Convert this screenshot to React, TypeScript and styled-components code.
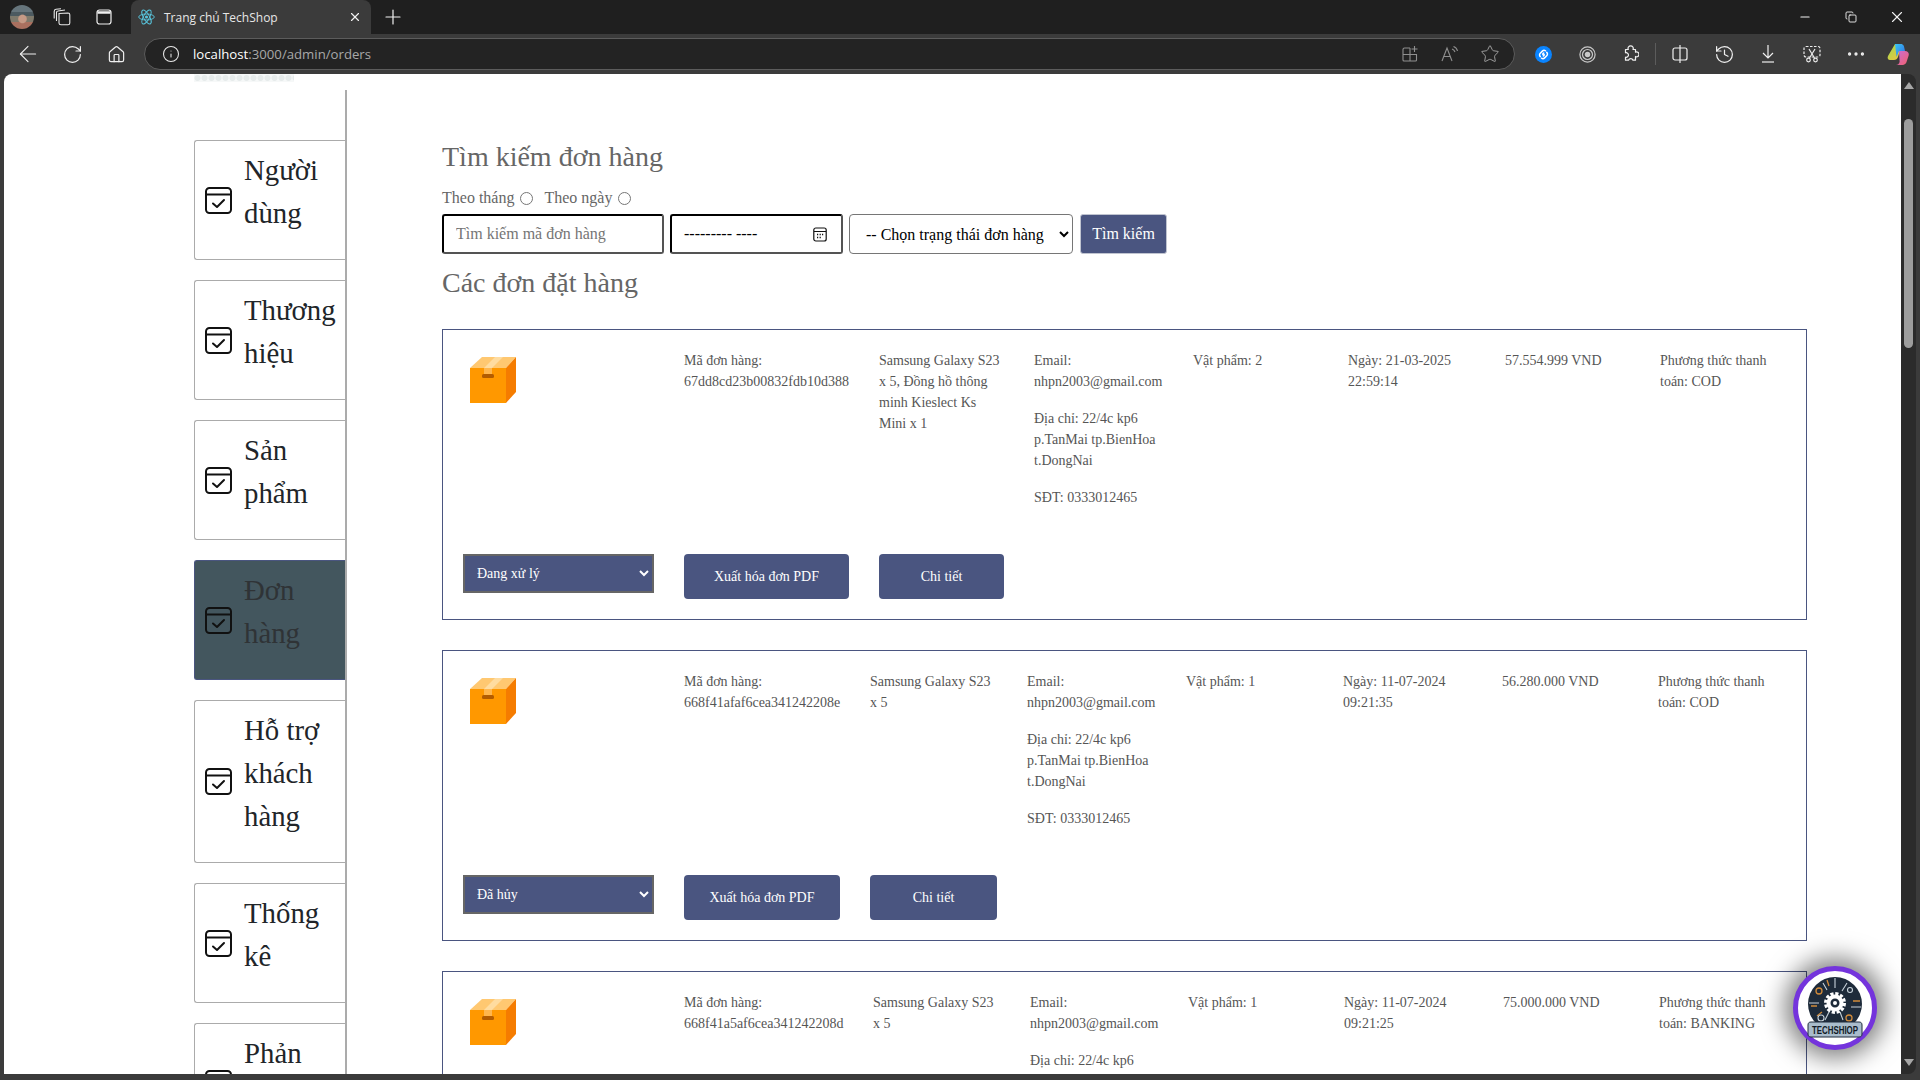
import React from 'react';
import styled, { createGlobalStyle } from 'styled-components';
import { ArrowLeft, Copy, History, Home, Info, Minus, MoreHorizontal, Plus, RotateCw, Star, X } from 'lucide-react';

const GlobalStyle = createGlobalStyle`
	html, body {
		margin: 0;
		padding: 0;
		height: 100%;
		overflow: hidden;
		background: #3b3b3b;
	}

	* {
		box-sizing: border-box;
	}
`;

const chromeFont = `"Open Sans", "Noto Sans", sans-serif`;
const pageFont = `"Liberation Serif", "Times New Roman", serif`;
const indigo = '#4a5580';

const Window = styled.div`
	display: flex;
	flex-direction: column;
	width: 1920px;
	height: 1080px;
	overflow: hidden;
	background: #3b3b3b;
`;

const TitleBar = styled.div`
	display: flex;
	align-items: flex-end;
	height: 34px;
	flex: none;
	background: #1f1f1f;
	color: #f2f2f2;
`;

const TitleSlot = styled.div<{ $w: number }>`
	display: flex;
	align-items: center;
	justify-content: center;
	flex: none;
	width: ${(p) => p.$w}px;
	height: 34px;
`;

const Avatar = styled.div`
	width: 24px;
	height: 24px;
	border-radius: 50%;
	background:
		radial-gradient(circle at 52% 58%, #c59a86 0 20%, transparent 26%),
		linear-gradient(180deg, #66757c 0 28%, #4c5a60 28% 45%, #7f7a6c 45% 72%, #a9705f 72% 100%);
`;

const Tab = styled.div`
	display: flex;
	align-items: center;
	width: 240px;
	height: 34px;
	margin-left: 3px;
	padding: 0 9px 0 7px;
	border-radius: 8px 8px 0 0;
	background: #3b3b3b;
	font: 12px ${chromeFont};
`;

const TabTitle = styled.span`
	flex: 1;
	margin-left: 9px;
	white-space: nowrap;
	color: #e6e6e6;
`;

const TitleSpacer = styled.div`
	flex: 1;
`;

const Toolbar = styled.div`
	display: flex;
	align-items: center;
	flex: none;
	height: 40px;
	padding-left: 6px;
	background: #3b3b3b;
	color: #f0f0f0;
`;

const ToolSlot = styled.div<{ $w?: number }>`
	display: flex;
	align-items: center;
	justify-content: center;
	flex: none;
	width: ${(p) => p.$w ?? 44}px;
	height: 32px;
`;

const AddressBar = styled.div`
	display: flex;
	align-items: center;
	flex: none;
	width: 1371px;
	height: 32px;
	margin: 0 6px;
	padding-left: 3px;
	border: 1px solid #5c5c5c;
	border-radius: 16px;
	background: #232323;
	font: 13.2px ${chromeFont};
	color: #a8a8a8;
`;

const AddressIcon = styled.div<{ $w: number }>`
	display: flex;
	align-items: center;
	justify-content: center;
	flex: none;
	width: ${(p) => p.$w}px;
	color: #9c9c9c;
`;

const AddressText = styled.div`
	flex: 1;
	margin-left: -1px;
	white-space: nowrap;

	b {
		font-weight: 400;
		color: #fff;
	}
`;

const ToolDivider = styled.div`
	flex: none;
	width: 1px;
	height: 22px;
	margin: 0 2px;
	background: #5c5c5c;
`;

const Viewport = styled.div`
	display: flex;
	flex: none;
	height: 1000px;
	padding-left: 4px;
`;

const Page = styled.div`
	position: relative;
	display: flex;
	flex: none;
	width: 1897px;
	height: 1000px;
	overflow: hidden;
	border-radius: 8px 0 0 0;
	background: #fff;
	font-family: ${pageFont};
`;

const ScrollTrack = styled.div`
	display: flex;
	flex-direction: column;
	align-items: center;
	flex: none;
	width: 15px;
	padding: 8px 0;
	border-radius: 0 8px 8px 0;
	background: #2b2b2b;
`;

const ScrollArrow = styled.div<{ $down?: boolean }>`
	flex: none;
	width: 0;
	height: 0;
	border-left: 5px solid transparent;
	border-right: 5px solid transparent;
	border-${(p) => (p.$down ? 'top' : 'bottom')}: 7px solid #a6a6a6;
`;

const ScrollThumb = styled.div`
	flex: none;
	width: 9px;
	height: 229px;
	margin-top: 30px;
	border-radius: 5px;
	background: #9d9d9d;
`;

const ScrollGap = styled.div`
	flex: 1;
`;

const LeftColumn = styled.div`
	flex: none;
	width: 343px;
	padding-left: 190px;
`;

const LogoStrip = styled.div`
	width: 100px;
	height: 8px;
	background-image: radial-gradient(circle, #e6ebeb 0 2.5px, #f6f8f8 3.5px);
	background-size: 7px 8px;
`;

const SideNav = styled.nav`
	display: flex;
	flex-direction: column;
	gap: 20px;
	margin-top: 8px;
	padding-top: 50px;
	border-right: 2px solid #ababab;
`;

const SideItem = styled.a<{ $active?: boolean }>`
	display: flex;
	align-items: center;
	flex: none;
	padding: 8px 0 8px 10px;
	border: 1px solid ${(p) => (p.$active ? indigo : '#ababab')};
	border-right: none;
	border-radius: 3px 0 0 3px;
	background: ${(p) => (p.$active ? '#43565e' : '#fff')};
	font-size: 28.8px;
	line-height: 43px;
	color: ${(p) => (p.$active ? '#2f3336' : '#212529')};
`;

const SideLabel = styled.span`
	flex: 1;
	margin-left: 12px;
	padding-bottom: 16px;
`;

const Main = styled.main`
	flex: 1;
	min-width: 0;
	padding: 63px 0 0 95px;
`;

const Heading = styled.h2`
	margin: 0;
	font-size: 28px;
	font-weight: 400;
	line-height: 40px;
	color: #666;
`;

const RadioRow = styled.div`
	display: flex;
	align-items: center;
	height: 20px;
	margin-top: 11px;
	font-size: 16px;
	color: #666;
`;

const RadioLabel = styled.label`
	display: flex;
	align-items: center;
	margin-right: 11px;
`;

const Radio = styled.input.attrs({ type: 'radio', name: 'mode' })`
	width: 13px;
	height: 13px;
	margin: 0 0 0 6px;
`;

const FilterRow = styled.form`
	display: flex;
	gap: 6px;
	height: 40px;
	margin: 6px 0 9px;
`;

const SearchInput = styled.input`
	width: 222px;
	height: 40px;
	padding: 0 12px;
	border: 2px inset #000;
	border-radius: 3px;
	font: 16px ${pageFont};
`;

const DateBox = styled.div`
	display: flex;
	align-items: center;
	justify-content: space-between;
	width: 173px;
	height: 40px;
	padding: 0 14px 0 12px;
	border: 2px inset #000;
	border-radius: 3px;
	font-size: 16px;
	color: #000;
`;

const StatusFilter = styled.select`
	width: 224px;
	height: 40px;
	padding: 0 12px;
	border: 1px solid #767676;
	border-radius: 4px;
	background: #fff;
	font: 16px ${pageFont};
	color: #000;
`;

const SearchButton = styled.button`
	width: 87px;
	height: 40px;
	margin-left: 1px;
	padding: 0;
	border: 1px solid #c0c4d0;
	border-radius: 3px;
	background: ${indigo};
	font: 16px ${pageFont};
	color: #fff;
`;

const OrderList = styled.div`
	display: flex;
	flex-direction: column;
	gap: 30px;
	width: 1365px;
	margin-top: 26px;
`;

const OrderCard = styled.article<{ $columns: string }>`
	display: grid;
	flex: none;
	grid-template-columns: ${(p) => p.$columns};
	grid-template-rows: 158px 45px;
	column-gap: 30px;
	row-gap: 46px;
	height: 291px;
	padding: 20px;
	border: 1px solid ${indigo};
	font-size: 14px;
	line-height: 21px;
	color: #555;
`;

const OrderCell = styled.div`
	p {
		margin: 0 0 16px;
	}

	p:last-child {
		margin-bottom: 0;
	}
`;

const BoxWrap = styled.div`
	padding: 7px 0 0 7px;
`;

const StatusSelect = styled.select`
	width: 100%;
	height: 39px;
	padding: 0 8px;
	border: 2px solid #666;
	border-radius: 0;
	background: ${indigo};
	font: 14px ${pageFont};
	color: #fff;
`;

const ActionButton = styled.button`
	width: 100%;
	height: 45px;
	padding: 0;
	border: none;
	border-radius: 4px;
	background: ${indigo};
	font: 14px ${pageFont};
	color: #fff;
`;

const ChatBubble = styled.div`
	position: absolute;
	left: 1789px;
	top: 892px;
	display: flex;
	align-items: center;
	justify-content: center;
	width: 84px;
	height: 84px;
	border: 5px solid #7434dc;
	border-radius: 50%;
	background: #fff;
	box-shadow: 0 0 24px 8px rgba(0, 0, 0, 0.5);
`;

const CheckCalendar = () => (
	<svg width="27" height="27" viewBox="0 0 27 27" fill="none" stroke="#111" strokeWidth="2" style={{ flex: 'none' }}>
		<rect x="1" y="1" width="25" height="25" rx="3.5" />
		<path d="M1 7.5h25" />
		<path d="M8 16.5l4 3.5 7-7" strokeLinecap="round" strokeLinejoin="round" />
	</svg>
);

const PackageBox = () => (
	<svg width="46" height="46" viewBox="0 0 46 46" style={{ display: 'block' }}>
		<path d="M0 11 L12 0 H46 L36 11Z" fill="#ffc871" />
		<path d="M14 11 L25 0 H33 L22 11Z" fill="#ffdca0" />
		<path d="M0 11 H36 V46 H0Z" fill="#ff9800" />
		<path d="M14 11 H22 V17 H14Z" fill="#ffb64d" />
		<path d="M36 11 L46 0 V35 L36 46Z" fill="#f57c00" />
		<rect x="12" y="17" width="12" height="4" rx="1.5" fill="#b35c00" />
	</svg>
);

const ShazamIcon = () => (
	<svg width="17" height="17" viewBox="0 0 17 17" fill="none">
		<circle cx="8.5" cy="8.5" r="8.5" fill="#0a84ff" />
		<path
			d="M10.500 4.800c-1-.7-2.300-.5-3.100.3L5.300 7.200c-1 1-1 2.500 0 3.400M8.700 7.100l-1 1M6.500 12.200c1 .7 2.300.5 3.100-.3l2.100-2.100c1-1 1-2.500 0-3.400M8.300 9.900l1-1"
			stroke="#fff"
			strokeWidth="1.500"
			strokeLinecap="round"
		/>
	</svg>
);

const TargetIcon = () => (
	<svg width="17" height="17" viewBox="0 0 17 17" fill="none" stroke="#c8c8c8" strokeWidth="1.2">
		<circle cx="8.5" cy="8.5" r="7.6" />
		<circle cx="8.5" cy="8.5" r="5" />
		<circle cx="8.5" cy="8.5" r="2.2" fill="#c8c8c8" />
	</svg>
);

const PuzzleIcon = () => (
	<svg width="16" height="18" viewBox="0 0 16 18" fill="none" stroke="#f0f0f0" strokeWidth="1.2" strokeLinejoin="round">
		<path d="M2.500 4.500H5.300a2.600 2.600 0 1 1 4.700 0h2.500v2.700a2.400 2.400 0 1 1 0 4.300v3.700H10a2.400 2.400 0 0 0-4.500 0H2.500v-3a2.300 2.300 0 1 0 0-4.400z" />
	</svg>
);

const SplitIcon = () => (
	<svg width="16" height="18" viewBox="0 0 16 18" fill="none" stroke="#f0f0f0" strokeWidth="1.2">
		<rect x="1" y="3" width="14" height="12" rx="2" />
		<path d="M8 0v18" />
	</svg>
);

const DownloadArrow = () => (
	<svg width="14" height="18" viewBox="0 0 14 18" fill="none" stroke="#f0f0f0" strokeWidth="1.2">
		<path d="M7 0v13M2 8l5 5 5-5" />
		<path d="M1 17h12" />
	</svg>
);

const ScreenshotIcon = () => (
	<svg width="18" height="18" viewBox="0 0 18 18" fill="none" stroke="#ededed" strokeWidth="1.2">
		<rect x="1" y="1.5" width="16" height="10.5" rx="2" strokeDasharray="2.5 1.5" />
		<path d="M6 4l5.5 9M12 4l-5.5 9" />
		<circle cx="5.5" cy="15" r="1.8" />
		<circle cx="12.5" cy="15" r="1.8" />
	</svg>
);

const CopilotIcon = () => (
	<svg width="22" height="22" viewBox="0 0 22 22">
		<defs>
			<linearGradient id="copilotA" x1="0" y1="0" x2="1" y2="1">
				<stop offset="0" stopColor="#38c6f4" />
				<stop offset="1" stopColor="#2f6ce5" />
			</linearGradient>
			<linearGradient id="copilotB" x1="0" y1="0" x2="1" y2="1">
				<stop offset="0" stopColor="#9ddb4f" />
				<stop offset="1" stopColor="#f5c23e" />
			</linearGradient>
			<linearGradient id="copilotC" x1="0" y1="0" x2="1" y2="1">
				<stop offset="0" stopColor="#c86dd7" />
				<stop offset="1" stopColor="#f2606b" />
			</linearGradient>
		</defs>
		<path d="M8 1h7l-4 13c-.6 2-2 3-4 3H3c-2 0-3-2-2-4z" fill="url(#copilotB)" />
		<path d="M8 1h6c1.5 0 2.7 1 3 2.4L18 8h-6L9.5 14z" fill="url(#copilotA)" />
		<path d="M12 8h6c3 0 4.500 2 3.500 5l-2 6c-.5 1.600-2 3-4 3H9c2 0 3-1 3.600-3z" fill="url(#copilotC)" />
	</svg>
);

const TabGroupIcon = () => (
	<svg width="18" height="18" viewBox="0 0 18 18" fill="none" stroke="#e8e8e8" strokeWidth="1.1">
		<path d="M6 5.500l9-.5c1 0 1.800.7 1.800 1.700V15c0 1-.8 1.800-1.800 1.800H8c-1 0-2-.8-2-1.800z" />
		<path d="M3.500 13V4.500C3.500 3.500 4.300 3 5 3l7-1" />
		<path d="M1.200 10.500V3.500C1.200 2 2 1.300 3 1.200L8 .8" />
	</svg>
);

const VerticalTabsIcon = () => (
	<svg width="16" height="16" viewBox="0 0 16 16" fill="none" stroke="#f0f0f0" strokeWidth="1.2">
		<rect x="1" y="1" width="14" height="14" rx="2.500" />
		<path d="M1.500 3.500h13" strokeWidth="2.500" />
	</svg>
);

const ReactIcon = () => (
	<svg width="17" height="16" viewBox="-12 -11 24 22" fill="none" stroke="#58c4dc" strokeWidth="1.300">
		<circle r="2.200" fill="#58c4dc" stroke="none" />
		<ellipse rx="11" ry="4.200" />
		<ellipse rx="11" ry="4.200" transform="rotate(60)" />
		<ellipse rx="11" ry="4.200" transform="rotate(120)" />
	</svg>
);

const AddTileIcon = () => (
	<svg width="16" height="16" viewBox="0 0 16 16" fill="none" stroke="#8f8f8f" strokeWidth="1.1">
		<path d="M8 2H2.500C1.700 2 1 2.700 1 3.500V14c0 .6.500 1 1 1h11.500c.6 0 1-.4 1-1V8.500H1M8 2v13" />
		<path d="M12.500 0v6M9.500 3h6" />
	</svg>
);

const ReadAloudIcon = () => (
	<svg width="18" height="16" viewBox="0 0 18 16" fill="none" stroke="#8f8f8f" strokeWidth="1.1">
		<path d="M1 15L6 2l5 13M3 10.500h6" />
		<path d="M11 3c1.500.5 2.500 1.500 3 3M12.500 .5c2 .7 3.500 2.300 4 4.500" />
	</svg>
);

const CalendarGlyph = () => (
	<svg width="14" height="15" viewBox="0 0 14 15" fill="none" stroke="#111" strokeWidth="1.2">
		<rect x=".8" y="1" width="12.400" height="13" rx="2" />
		<path d="M1 4.500h12" />
		<path d="M4 7.500h1.200M6.600 7.500h1.200M9 7.500h1.200M4 10.500h1.200M6.600 10.500h1.200" strokeWidth="1.500" />
	</svg>
);

const TechShopLogo = () => (
	<svg width="74" height="74" viewBox="1 1 74 74">
		<circle cx="38" cy="34" r="27" fill="#1e2b3a" />
		<g fill="none" stroke="#d08a3a" strokeWidth="1.300">
			<circle cx="22" cy="21" r="3" />
			<circle cx="52" cy="48" r="3" />
			<path d="M14 36h6M56 31h7M30 10l2 6M20 46l5-4" />
		</g>
		<g fill="none" stroke="#c7d2da" strokeWidth="1.100">
			<path d="M38 8v10M50 13l-5 8M26 13l4 7M12 33h10M54 37h10M28 50l4-8M46 50l-3-8" />
			<circle cx="53" cy="20" r="2.500" />
			<circle cx="24" cy="48" r="3" />
		</g>
		<circle cx="38" cy="33" r="6.500" fill="none" stroke="#fff" strokeWidth="4" />
		<circle cx="38" cy="33" r="9.500" fill="none" stroke="#fff" strokeWidth="3" strokeDasharray="3.200 1.770" />
		<circle cx="38" cy="33" r="2" fill="#fff" />
		<path d="M11 55c0-2 1-3 3-3h48c2 0 3 1 3 3v9c0 2-1 3-3 3H14c-2 0-3-1-3-3z" fill="#a9bccb" stroke="#1e2b3a" strokeWidth="1" />
		<text x="38" y="64" textAnchor="middle" fontFamily="Liberation Sans, sans-serif" fontSize="11.500" fontWeight="700" fill="#101a26" textLength="46" lengthAdjust="spacingAndGlyphs">
			TECHSHIOP
		</text>
	</svg>
);

type Order = {
	columns: string;
	id: string;
	items: string;
	qty: number;
	date: string;
	total: string;
	payment: string;
	status: string;
};

const orders: Order[] = [
	{
		columns: '191px 165px 125px 129px 125px 127px 125px 1fr',
		id: '67dd8cd23b00832fdb10d388',
		items: 'Samsung Galaxy S23 x 5, Đồng hồ thông minh Kieslect Ks Mini x 1',
		qty: 2,
		date: '21-03-2025 22:59:14',
		total: '57.554.999 VND',
		payment: 'COD',
		status: 'Đang xử lý',
	},
	{
		columns: '191px 156px 127px 129px 127px 129px 126px 1fr',
		id: '668f41afaf6cea341242208e',
		items: 'Samsung Galaxy S23 x 5',
		qty: 1,
		date: '11-07-2024 09:21:35',
		total: '56.280.000 VND',
		payment: 'COD',
		status: 'Đã hủy',
	},
	{
		columns: '191px 159px 127px 128px 126px 129px 126px 1fr',
		id: '668f41a5af6cea341242208d',
		items: 'Samsung Galaxy S23 x 5',
		qty: 1,
		date: '11-07-2024 09:21:25',
		total: '75.000.000 VND',
		payment: 'BANKING',
		status: 'Đang xử lý',
	},
];

const navItems = ['Người dùng', 'Thương hiệu', 'Sản phẩm', 'Đơn hàng', 'Hỗ trợ khách hàng', 'Thống kê', 'Phản hồi'];

const statuses = ['Đang xử lý', 'Đã giao', 'Đã hủy'];

export default function App() {
	return (
		<Window>
			<GlobalStyle />
			<TitleBar>
				<TitleSlot $w={44}>
					<Avatar />
				</TitleSlot>
				<TitleSlot $w={36}>
					<TabGroupIcon />
				</TitleSlot>
				<TitleSlot $w={48}>
					<VerticalTabsIcon />
				</TitleSlot>
				<Tab>
					<ReactIcon />
					<TabTitle>Trang chủ TechShop</TabTitle>
					<X size={14} strokeWidth={2} />
				</Tab>
				<TitleSlot $w={44}>
					<Plus size={24} strokeWidth={1.2} />
				</TitleSlot>
				<TitleSpacer />
				<TitleSlot $w={46}>
					<Minus size={14} strokeWidth={2} />
				</TitleSlot>
				<TitleSlot $w={46}>
					<Copy size={12} strokeWidth={1.8} />
				</TitleSlot>
				<TitleSlot $w={46}>
					<X size={18} strokeWidth={1.5} />
				</TitleSlot>
			</TitleBar>
			<Toolbar>
				<ToolSlot>
					<ArrowLeft size={26} strokeWidth={1} />
				</ToolSlot>
				<ToolSlot>
					<RotateCw size={21} strokeWidth={1.4} />
				</ToolSlot>
				<ToolSlot>
					<Home size={19} strokeWidth={1.5} />
				</ToolSlot>
				<AddressBar>
					<AddressIcon $w={46}>
						<Info size={18} strokeWidth={1.4} color="#e8e8e8" />
					</AddressIcon>
					<AddressText>
						<b>localhost</b>:3000/admin/orders
					</AddressText>
					<AddressIcon $w={40}>
						<AddTileIcon />
					</AddressIcon>
					<AddressIcon $w={40}>
						<ReadAloudIcon />
					</AddressIcon>
					<AddressIcon $w={40}>
						<Star size={20} strokeWidth={1.2} />
					</AddressIcon>
					<AddressIcon $w={4} />
				</AddressBar>
				<ToolSlot>
					<ShazamIcon />
				</ToolSlot>
				<ToolSlot>
					<TargetIcon />
				</ToolSlot>
				<ToolSlot>
					<PuzzleIcon />
				</ToolSlot>
				<ToolDivider />
				<ToolSlot>
					<SplitIcon />
				</ToolSlot>
				<ToolSlot>
					<History size={21} strokeWidth={1.4} />
				</ToolSlot>
				<ToolSlot>
					<DownloadArrow />
				</ToolSlot>
				<ToolSlot>
					<ScreenshotIcon />
				</ToolSlot>
				<ToolSlot>
					<MoreHorizontal size={22} strokeWidth={1.6} />
				</ToolSlot>
				<ToolSlot $w={40}>
					<CopilotIcon />
				</ToolSlot>
			</Toolbar>
			<Viewport>
				<Page>
					<LeftColumn>
						<LogoStrip />
						<SideNav>
							{navItems.map((item) => (
								<SideItem key={item} $active={item === 'Đơn hàng'}>
									<CheckCalendar />
									<SideLabel>{item}</SideLabel>
								</SideItem>
							))}
						</SideNav>
					</LeftColumn>
					<Main>
						<Heading>Tìm kiếm đơn hàng</Heading>
						<RadioRow>
							<RadioLabel>
								Theo tháng
								<Radio />
							</RadioLabel>
							<RadioLabel>
								Theo ngày
								<Radio />
							</RadioLabel>
						</RadioRow>
						<FilterRow>
							<SearchInput placeholder="Tìm kiếm mã đơn hàng" />
							<DateBox>
								<span>--------- ----</span>
								<CalendarGlyph />
							</DateBox>
							<StatusFilter defaultValue="">
								<option value="">-- Chọn trạng thái đơn hàng</option>
							</StatusFilter>
							<SearchButton type="button">Tìm kiếm</SearchButton>
						</FilterRow>
						<Heading>Các đơn đặt hàng</Heading>
						<OrderList>
							{orders.map((order) => (
								<OrderCard key={order.id} $columns={order.columns}>
									<BoxWrap>
										<PackageBox />
									</BoxWrap>
									<OrderCell>
										Mã đơn hàng:
										<br />
										{order.id}
									</OrderCell>
									<OrderCell>{order.items}</OrderCell>
									<OrderCell>
										<p>Email: nhpn2003@gmail.com</p>
										<p>Địa chỉ: 22/4c kp6 p.TanMai tp.BienHoa t.DongNai</p>
										<p>SĐT: 0333012465</p>
									</OrderCell>
									<OrderCell>Vật phẩm: {order.qty}</OrderCell>
									<OrderCell>Ngày: {order.date}</OrderCell>
									<OrderCell>{order.total}</OrderCell>
									<OrderCell>Phương thức thanh toán: {order.payment}</OrderCell>
									<div>
										<StatusSelect defaultValue={order.status}>
											{statuses.map((status) => (
												<option key={status}>{status}</option>
											))}
										</StatusSelect>
									</div>
									<div>
										<ActionButton type="button">Xuất hóa đơn PDF</ActionButton>
									</div>
									<div>
										<ActionButton type="button">Chi tiết</ActionButton>
									</div>
								</OrderCard>
							))}
						</OrderList>
					</Main>
					<ChatBubble>
						<TechShopLogo />
					</ChatBubble>
				</Page>
				<ScrollTrack>
					<ScrollArrow />
					<ScrollThumb />
					<ScrollGap />
					<ScrollArrow $down />
				</ScrollTrack>
			</Viewport>
		</Window>
	);
}
